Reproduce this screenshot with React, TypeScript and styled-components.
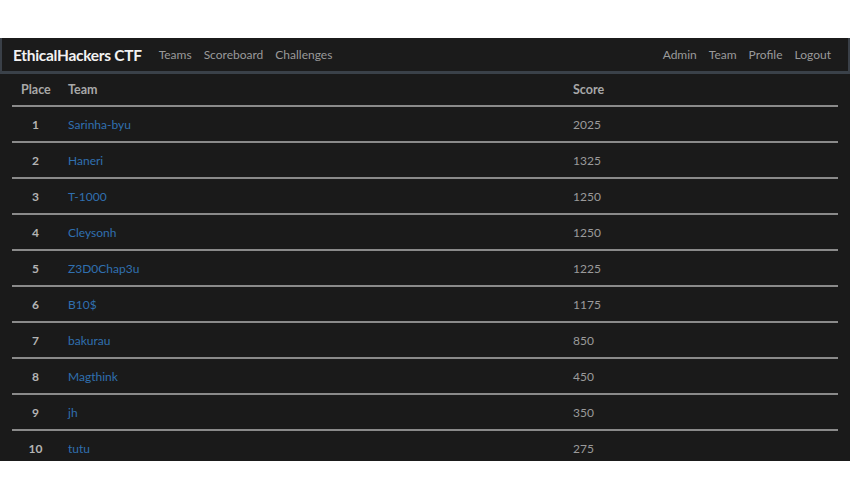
import React from "react";
import styled, { createGlobalStyle } from "styled-components";

const Global = createGlobalStyle`
  html, body { margin: 0; padding: 0; background: #ffffff; }
  body { font-family: Lato, "Open Sans", sans-serif; }
`;

const Frame = styled.div`
  margin-top: 38px;
  height: 423px;
  overflow: hidden;
  background: #1a1a1a;
`;

const Nav = styled.nav`
  height: 33px;
  display: flex;
  align-items: center;
  justify-content: space-between;
  background: #1b1b1b;
  border-left: 2px solid #3a4048;
  border-right: 2px solid #3a4048;
  border-bottom: 3px solid #3a4149;
  padding: 0 17px 0 11px;
`;

const Left = styled.div`
  display: flex;
  align-items: center;
`;

const Brand = styled.span`
  color: #f2f2f2;
  font-size: 15.5px;
  font-weight: 700;
  letter-spacing: -0.3px;
  margin-right: 17px;
`;

const Links = styled.div`
  display: flex;
  gap: 12px;
`;

const NavLink = styled.a`
  color: #9a9a9a;
  font-size: 12px;
  text-decoration: none;
`;

const Table = styled.table`
  margin: 0 12px;
  width: 826px;
  border-collapse: collapse;
  table-layout: fixed;
`;

const Th = styled.th<{ $center?: boolean; $w?: number }>`
  height: 31px;
  padding: 0 9px;
  color: #a8a8a8;
  font-size: 12.5px;
  font-weight: 700;
  text-align: ${(p) => (p.$center ? "center" : "left")};
  width: ${(p) => (p.$w ? `${p.$w}px` : "auto")};
  border-bottom: 2px solid #8a8a8a;
`;

const Tr = styled.tr`
  & + & td {
    border-top: 2px solid #8a8a8a;
  }
`;

const Td = styled.td<{ $kind: "place" | "team" | "score" }>`
  height: 34px;
  padding: 0 9px;
  font-size: 12px;
  font-weight: ${(p) => (p.$kind === "place" ? 700 : 400)};
  text-align: ${(p) => (p.$kind === "place" ? "center" : "left")};
  color: ${(p) =>
    p.$kind === "place" ? "#b4b4b4" : p.$kind === "score" ? "#9a9a9a" : "#2f6aa8"};
`;

const TeamLink = styled.a`
  color: #3070b0;
  text-decoration: none;
`;

const rows: [number, string, number][] = [
  [1, "Sarinha-byu", 2025],
  [2, "Haneri", 1325],
  [3, "T-1000", 1250],
  [4, "Cleysonh", 1250],
  [5, "Z3D0Chap3u", 1225],
  [6, "B10$", 1175],
  [7, "bakurau", 850],
  [8, "Magthink", 450],
  [9, "jh", 350],
  [10, "tutu", 275],
];

export default function App() {
  return (
    <>
      <Global />
      <Frame>
        <Nav>
          <Left>
            <Brand>EthicalHackers CTF</Brand>
            <Links>
              <NavLink>Teams</NavLink>
              <NavLink>Scoreboard</NavLink>
              <NavLink>Challenges</NavLink>
            </Links>
          </Left>
          <Links>
            <NavLink>Admin</NavLink>
            <NavLink>Team</NavLink>
            <NavLink>Profile</NavLink>
            <NavLink>Logout</NavLink>
          </Links>
        </Nav>
        <Table>
          <thead>
            <tr>
              <Th $center $w={29}>Place</Th>
              <Th $w={487}>Team</Th>
              <Th>Score</Th>
            </tr>
          </thead>
          <tbody>
            {rows.map(([p, t, s]) => (
              <Tr key={p}>
                <Td $kind="place">{p}</Td>
                <Td $kind="team">
                  <TeamLink>{t}</TeamLink>
                </Td>
                <Td $kind="score">{s}</Td>
              </Tr>
            ))}
          </tbody>
        </Table>
      </Frame>
    </>
  );
}
